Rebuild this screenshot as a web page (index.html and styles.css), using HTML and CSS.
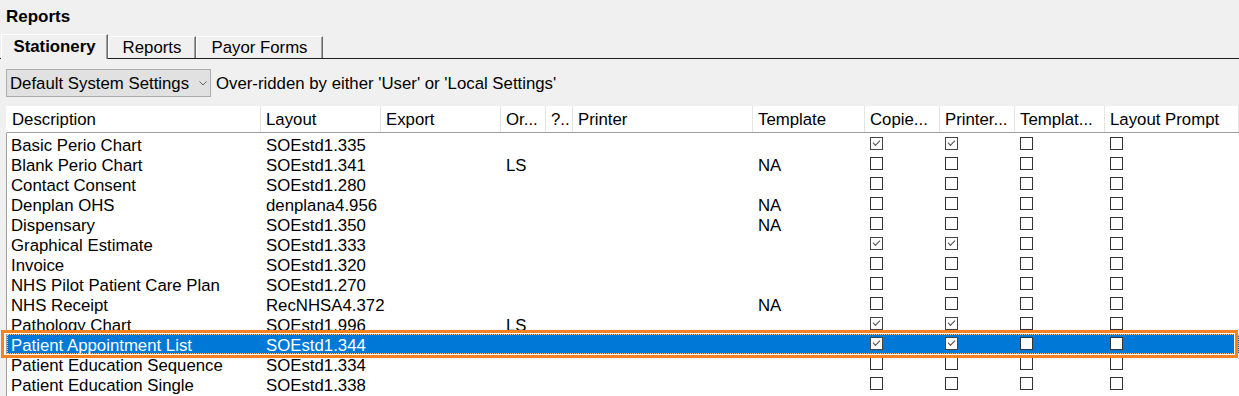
FILE: index.html
```html
<!DOCTYPE html>
<html>
<head>
<meta charset="utf-8">
<title>Reports</title>
<link rel="stylesheet" href="styles.css">
</head>
<body>
<div class="title">Reports</div>
<div class="tabs">
  <div class="tab active">Stationery</div>
  <div class="tab t-reports">Reports</div>
  <div class="tab t-payor">Payor Forms</div>
</div>
<div class="toolbar">
  <div class="combo">
    <span class="combo-text">Default System Settings</span>
    <svg class="chev" width="8" height="5" viewBox="0 0 8 5"><polyline points="0.5,0.5 4,4 7.5,0.5" fill="none" stroke="#606060" stroke-width="1"/></svg>
  </div>
  <span class="note">Over-ridden by either 'User' or 'Local Settings'</span>
</div>
<div class="list">
  <div class="hdr">
    <div class="hc">Description</div>
    <div class="hc">Layout</div>
    <div class="hc">Export</div>
    <div class="hc">Or...</div>
    <div class="hc">?..</div>
    <div class="hc">Printer</div>
    <div class="hc">Template</div>
    <div class="hc">Copie...</div>
    <div class="hc">Printer...</div>
    <div class="hc">Templat...</div>
    <div class="hc">Layout Prompt</div>
  </div>
  <div class="rows">
    <div class="row"><div class="c first">Basic Perio Chart</div><div class="c">SOEstd1.335</div><div class="c"></div><div class="c"></div><div class="c"></div><div class="c"></div><div class="c"></div><div class="c"><span class="cb on"></span></div><div class="c"><span class="cb on"></span></div><div class="c"><span class="cb"></span></div><div class="c"><span class="cb"></span></div></div>
    <div class="row"><div class="c first">Blank Perio Chart</div><div class="c">SOEstd1.341</div><div class="c"></div><div class="c">LS</div><div class="c"></div><div class="c"></div><div class="c">NA</div><div class="c"><span class="cb"></span></div><div class="c"><span class="cb"></span></div><div class="c"><span class="cb"></span></div><div class="c"><span class="cb"></span></div></div>
    <div class="row"><div class="c first">Contact Consent</div><div class="c">SOEstd1.280</div><div class="c"></div><div class="c"></div><div class="c"></div><div class="c"></div><div class="c"></div><div class="c"><span class="cb"></span></div><div class="c"><span class="cb"></span></div><div class="c"><span class="cb"></span></div><div class="c"><span class="cb"></span></div></div>
    <div class="row"><div class="c first">Denplan OHS</div><div class="c">denplana4.956</div><div class="c"></div><div class="c"></div><div class="c"></div><div class="c"></div><div class="c">NA</div><div class="c"><span class="cb"></span></div><div class="c"><span class="cb"></span></div><div class="c"><span class="cb"></span></div><div class="c"><span class="cb"></span></div></div>
    <div class="row"><div class="c first">Dispensary</div><div class="c">SOEstd1.350</div><div class="c"></div><div class="c"></div><div class="c"></div><div class="c"></div><div class="c">NA</div><div class="c"><span class="cb"></span></div><div class="c"><span class="cb"></span></div><div class="c"><span class="cb"></span></div><div class="c"><span class="cb"></span></div></div>
    <div class="row"><div class="c first">Graphical Estimate</div><div class="c">SOEstd1.333</div><div class="c"></div><div class="c"></div><div class="c"></div><div class="c"></div><div class="c"></div><div class="c"><span class="cb on"></span></div><div class="c"><span class="cb on"></span></div><div class="c"><span class="cb"></span></div><div class="c"><span class="cb"></span></div></div>
    <div class="row"><div class="c first">Invoice</div><div class="c">SOEstd1.320</div><div class="c"></div><div class="c"></div><div class="c"></div><div class="c"></div><div class="c"></div><div class="c"><span class="cb"></span></div><div class="c"><span class="cb"></span></div><div class="c"><span class="cb"></span></div><div class="c"><span class="cb"></span></div></div>
    <div class="row"><div class="c first">NHS Pilot Patient Care Plan</div><div class="c">SOEstd1.270</div><div class="c"></div><div class="c"></div><div class="c"></div><div class="c"></div><div class="c"></div><div class="c"><span class="cb"></span></div><div class="c"><span class="cb"></span></div><div class="c"><span class="cb"></span></div><div class="c"><span class="cb"></span></div></div>
    <div class="row"><div class="c first">NHS Receipt</div><div class="c">RecNHSA4.372</div><div class="c"></div><div class="c"></div><div class="c"></div><div class="c"></div><div class="c">NA</div><div class="c"><span class="cb"></span></div><div class="c"><span class="cb"></span></div><div class="c"><span class="cb"></span></div><div class="c"><span class="cb"></span></div></div>
    <div class="row"><div class="c first">Pathology Chart</div><div class="c">SOEstd1.996</div><div class="c"></div><div class="c">LS</div><div class="c"></div><div class="c"></div><div class="c"></div><div class="c"><span class="cb on"></span></div><div class="c"><span class="cb on"></span></div><div class="c"><span class="cb"></span></div><div class="c"><span class="cb"></span></div></div>
    <div class="row selected"><div class="c first">Patient Appointment List</div><div class="c">SOEstd1.344</div><div class="c"></div><div class="c"></div><div class="c"></div><div class="c"></div><div class="c"></div><div class="c"><span class="cb on"></span></div><div class="c"><span class="cb on"></span></div><div class="c"><span class="cb"></span></div><div class="c"><span class="cb"></span></div></div>
    <div class="row"><div class="c first">Patient Education Sequence</div><div class="c">SOEstd1.334</div><div class="c"></div><div class="c"></div><div class="c"></div><div class="c"></div><div class="c"></div><div class="c"><span class="cb"></span></div><div class="c"><span class="cb"></span></div><div class="c"><span class="cb"></span></div><div class="c"><span class="cb"></span></div></div>
    <div class="row"><div class="c first">Patient Education Single</div><div class="c">SOEstd1.338</div><div class="c"></div><div class="c"></div><div class="c"></div><div class="c"></div><div class="c"></div><div class="c"><span class="cb"></span></div><div class="c"><span class="cb"></span></div><div class="c"><span class="cb"></span></div><div class="c"><span class="cb"></span></div></div>
  </div>
</div>
<div class="highlight"></div>
</body>
</html>
```
FILE: styles.css
```css
html, body {
  margin: 0;
  padding: 0;
  overflow: hidden;
}
body {
  position: relative;
  width: 1239px;
  height: 396px;
  background: #f0f0f0;
  font-family: "Liberation Sans", Arial, sans-serif;
  font-size: 16.8px;
  color: #000;
}
.title {
  padding: 7px 0 0 6px;
  height: 19px;
  line-height: 20px;
  font-size: 17px;
  font-weight: bold;
}
.tabs {
  display: flex;
  align-items: flex-end;
  margin-top: 8px;
  padding-left: 1px;
  height: 24px;
  border-bottom: 1px solid #1e1e1e;
}
.tab {
  box-sizing: border-box;
  height: 22px;
  padding-top: 1px;
  line-height: 20px;
  text-align: center;
  background: #f0f0f0;
  border-top: 1px solid #fff;
  border-left: 1px solid #fff;
  border-right: 1px solid #696969;
  box-shadow: inset -1px 0 0 #a0a0a0;
  white-space: nowrap;
}
.tab.active {
  position: relative;
  z-index: 1;
  width: 107px;
  height: 25px;
  padding-top: 2px;
  line-height: 20px;
  margin-bottom: -1px;
  font-weight: bold;
}
.t-reports { width: 88px; }
.t-payor { width: 127px; }
.toolbar {
  display: flex;
  align-items: center;
  margin-top: 10px;
  padding-left: 6px;
  height: 28px;
}
.combo {
  box-sizing: border-box;
  display: flex;
  align-items: center;
  width: 205px;
  height: 28px;
  padding-left: 3px;
  padding-right: 3px;
  border: 1px solid #adadad;
  background: #e1e1e1;
}
.combo-text {
  white-space: nowrap;
  padding-top: 2px;
  line-height: 24px;
}
.chev {
  display: block;
  margin-left: auto;
  margin-top: 1px;
}
.note {
  margin-left: 5px;
  padding-top: 2px;
  line-height: 24px;
  white-space: nowrap;
}
.list {
  margin-top: 9px;
  margin-left: 6px;
  width: 1233px;
  overflow: hidden;
}
.hdr, .row {
  display: grid;
  grid-template-columns: 254px 120px 120px 45px 27px 180px 112px 75px 75px 90px 1fr;
}
.hdr {
  box-sizing: content-box;
  height: 26px;
  background: #fff;
  border-left: 1px solid #fff;
  border-bottom: 1px solid #a0a0a0;
}
.hc {
  box-sizing: border-box;
  padding: 2px 0 0 5px;
  line-height: 24px;
  border-right: 1px solid #e5e5e5;
  white-space: nowrap;
  overflow: hidden;
}
.rows {
  background: #fff;
  border-left: 1px solid #a0a0a0;
  padding-top: 1px;
  height: 262px;
  overflow: hidden;
}
.row {
  box-sizing: border-box;
  height: 20px;
  padding-top: 3px;
  line-height: 17px;
}
.c {
  padding-left: 5px;
  white-space: nowrap;
  overflow: visible;
}
.c.first {
  padding-left: 4px;
}
.row.selected {
  background: #0078d7;
  color: #fff;
  outline: 1px dotted #f6c38f;
  outline-offset: -1px;
}
.cb {
  display: block;
  box-sizing: border-box;
  width: 13px;
  height: 13px;
  border: 1px solid #333;
  background: #fff;
  position: relative;
}
.cb.on {
  border-color: #444;
}
.cb.on::after {
  content: "";
  position: absolute;
  left: 2px;
  top: 1.5px;
  width: 6px;
  height: 3px;
  border-left: 1.5px solid #4a4a4a;
  border-bottom: 1.5px solid #4a4a4a;
  transform: rotate(-45deg);
}
.highlight {
  position: absolute;
  left: 1px;
  top: 330px;
  width: 1237px;
  height: 28px;
  box-sizing: border-box;
  border: 3px solid #f7821e;
  box-shadow: inset 0 0 0 1px #fff;
  pointer-events: none;
}
```
